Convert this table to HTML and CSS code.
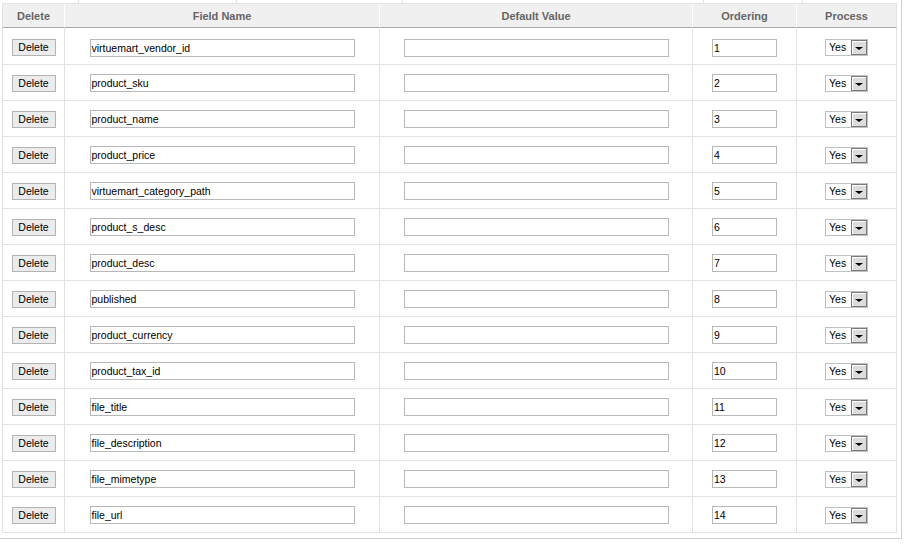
FILE: index.html
```html
<!DOCTYPE html>
<html>
<head>
<meta charset="utf-8">
<link rel="stylesheet" href="styles.css">
</head>
<body>
<div class="outer">
  <div class="prev">
    <div class="pc" style="width:76px"></div>
    <div class="pc" style="width:157px"></div>
    <div class="pc" style="width:165px"></div>
    <div class="pc" style="width:300px"></div>
    <div class="pc" style="width:98px"></div>
  </div>
  <table class="list">
    <thead>
      <tr>
        <th class="c-del">Delete</th>
        <th class="c-field">Field Name</th>
        <th class="c-def">Default Value</th>
        <th class="c-ord">Ordering</th>
        <th class="c-proc">Process</th>
      </tr>
    </thead>
    <tbody id="rows"></tbody>
  </table>
</div>
<script>
  var names = ["virtuemart_vendor_id","product_sku","product_name","product_price","virtuemart_category_path","product_s_desc","product_desc","published","product_currency","product_tax_id","file_title","file_description","file_mimetype","file_url"];
  var html = "";
  names.forEach(function (n, i) {
    html += '<tr>' +
      '<td><span class="btn">Delete</span></td>' +
      '<td><span class="inp wide">' + n + '</span></td>' +
      '<td><span class="inp wide"></span></td>' +
      '<td><span class="inp ord">' + (i + 1) + '</span></td>' +
      '<td><span class="sel"><span class="sel-txt">Yes</span><span class="sel-btn"><span class="arr"></span></span></span></td>' +
      '</tr>';
  });
  document.getElementById("rows").innerHTML = html;
</script>
</body>
</html>
```
FILE: styles.css
```css
html, body {
  margin: 0;
  padding: 0;
  background: #fff;
  font-family: "Liberation Sans", Arial, sans-serif;
  font-size: 11px;
  overflow: hidden;
}

.outer {
  margin-left: -3px;
  width: 895px;
  padding: 0 4px 5px 4px;
  border: 1px solid #cfcfcf;
  border-top: none;
}

.prev {
  display: flex;
  height: 3px;
  border-bottom: 1px solid #e2e2e2;
}

.pc {
  height: 3px;
  border-right: 1px solid #e2e2e2;
}

.list {
  width: 895px;
  table-layout: fixed;
  border-collapse: separate;
  border-spacing: 0;
  border-left: 1px solid #e2e2e2;
}

.list th, .list td {
  box-sizing: border-box;
  padding: 0;
  text-align: center;
}

.c-del { width: 62px; }
.c-field { width: 315px; }
.c-def { width: 313px; }
.c-ord { width: 104px; }
.c-proc { width: 100px; }

.list th {
  height: 24px;
  background: #f0f0f0;
  color: #666;
  font-weight: bold;
  font-size: 11px;
  border-right: 1px solid #fff;
  border-bottom: 1px solid #a8a8a8;
  vertical-align: middle;
  padding-top: 1px;
}

.list th.c-proc {
  border-right: 1px solid #e2e2e2;
}

.list td {
  height: 36px;
  border-right: 1px solid #e2e2e2;
  border-bottom: 1px solid #e2e2e2;
  vertical-align: middle;
  padding-top: 1px;
}

.list tbody tr:first-child td {
  height: 37px;
  padding-top: 3px;
}

.btn {
  display: inline-block;
  box-sizing: border-box;
  width: 44px;
  height: 17px;
  line-height: 15px;
  border: 1px solid #b4b4b4;
  background: #ececec;
  color: #000;
  font-size: 10.5px;
  text-align: center;
  vertical-align: middle;
}

.inp {
  display: inline-block;
  box-sizing: border-box;
  height: 18px;
  line-height: 16px;
  border: 1px solid #b8b8b8;
  background: #fff;
  color: #000;
  font-size: 10.5px;
  text-align: left;
  padding-left: 1px;
  vertical-align: middle;
  overflow: hidden;
  white-space: nowrap;
}

.inp.wide { width: 265px; }
.inp.ord { width: 65px; }

.sel {
  display: inline-flex;
  box-sizing: border-box;
  width: 43px;
  height: 17px;
  border: 1px solid #c0c0c0;
  background: #fff;
  vertical-align: middle;
  text-align: left;
}

.sel-txt {
  flex: 1;
  line-height: 15px;
  padding-left: 3px;
  color: #000;
  font-size: 10.5px;
}

.sel-btn {
  box-sizing: border-box;
  width: 16px;
  height: 15px;
  border: 1px solid #7a7a7a;
  background: #dcdcdc;
  box-shadow: inset 1px 1px 0 #fff;
  display: flex;
  align-items: center;
  justify-content: center;
}

.arr {
  width: 0;
  height: 0;
  margin-top: 2px;
  border-left: 4px solid transparent;
  border-right: 4px solid transparent;
  border-top: 3px solid #000;
}
```
